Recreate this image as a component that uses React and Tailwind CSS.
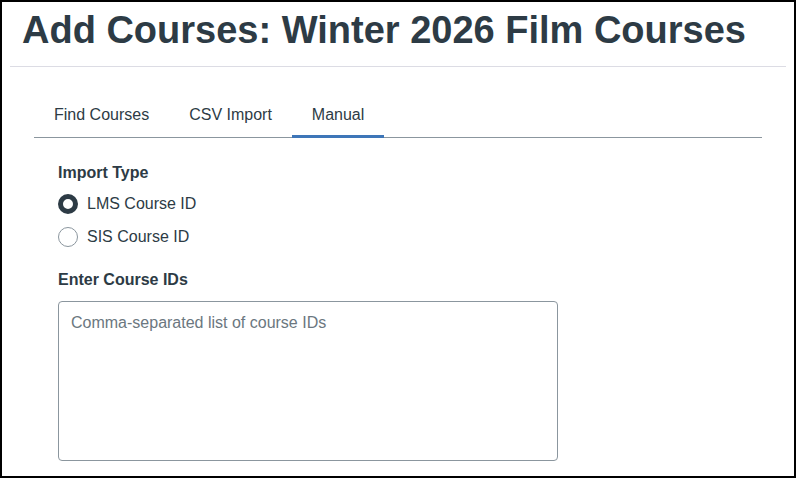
import React from "react";

export default function App() {
  const font = { fontFamily: '"Liberation Sans", Arial, sans-serif' };
  return (
    <div
      className="w-[796px] h-[478px] border-2 border-black bg-white overflow-hidden box-border text-[#2d3b45]"
      style={font}
    >
      <div className="pl-[20px] pt-[6px]">
        <h1 className="text-[38px] font-bold leading-[44px] text-[#2d3b45]">
          Add Courses: Winter 2026 Film Courses
        </h1>
      </div>
      <div className="mx-[8px] mt-[14px] border-t border-[#dcdce4]" />
      <div className="mx-[32px] mt-[38px]">
        <div className="flex border-b border-[#8b969e] text-[16px]">
          <div className="px-[20px] pb-[12px] leading-[20px]">Find Courses</div>
          <div className="px-[20px] pb-[12px] leading-[20px]">CSV Import</div>
          <div className="px-[20px] pb-[9px] leading-[20px] border-b-[3px] border-[#3e76b8] mb-[-1px]">
            Manual
          </div>
        </div>
        <div className="px-[24px] pt-[25px]">
          <div className="text-[16px] font-bold leading-[20px]">Import Type</div>
          <div className="mt-[11px] flex flex-col gap-[13px]">
            <label className="flex items-center gap-[9px] text-[16px] leading-[20px]">
              <span className="w-[20px] h-[20px] rounded-full border-[5px] border-[#2d3b45] bg-white box-border" />
              LMS Course ID
            </label>
            <label className="flex items-center gap-[9px] text-[16px] leading-[20px]">
              <span className="w-[20px] h-[20px] rounded-full border border-[#8b969e] bg-white box-border" />
              SIS Course ID
            </label>
          </div>
          <div className="mt-[23px] text-[16px] font-bold leading-[20px]">Enter Course IDs</div>
          <div className="mt-[11px] w-[500px] h-[160px] border border-[#8b969e] rounded-[4px] px-[12px] pt-[11px] text-[16px] leading-[20px] text-[#6b7780]">
            Comma-separated list of course IDs
          </div>
        </div>
      </div>
    </div>
  );
}
